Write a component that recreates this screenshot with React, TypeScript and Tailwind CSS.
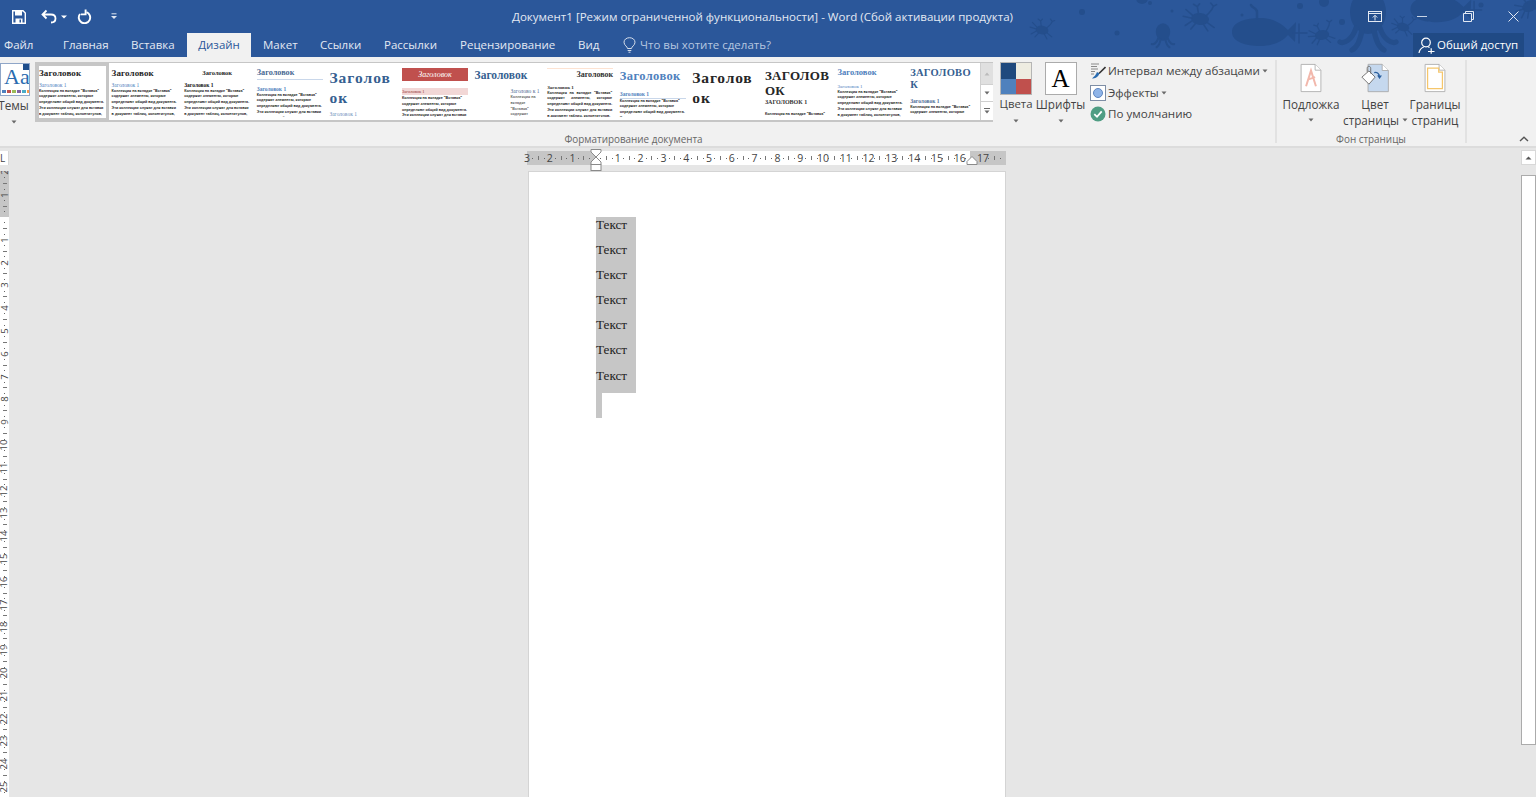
import { ReactNode } from "react";

const UI = "font-['Open_Sans','Noto_Sans',sans-serif]";
const SERIF = "font-['Liberation_Serif',serif]";

const tabs = [
  { label: "Файл", cls: "ml-[4px] w-[29px]" },
  { label: "Главная", cls: "ml-[30px] w-[45px]" },
  { label: "Вставка", cls: "ml-[23px] w-[43px]" },
  { label: "Макет", cls: "ml-[12px] w-[34px]" },
  { label: "Ссылки", cls: "ml-[23px] w-[41px]" },
  { label: "Рассылки", cls: "ml-[23px] w-[57px]" },
  { label: "Рецензирование", cls: "ml-[19px] w-[95px]" },
  { label: "Вид", cls: "ml-[23px] w-[22px]" },
];

const BODY =
  "Коллекция на вкладке \"Вставка\" содержит элементы, которые определяют общий вид документа. Эти коллекции служат для вставки в документ таблиц, колонтитулов,";

type Style = {
  title: string;
  headCls: string;
  sub: string;
  subCls: string;
  bodyCls: string;
  top: string;
  body?: string;
};

const styles: Style[] = [
  { title: "Заголовок", headCls: "text-[9px] leading-[10px] font-bold text-[#262626] tracking-[0.1px]", sub: "Заголовок 1", subCls: "text-[5.5px] leading-[7px] mt-[3.5px] text-[#4f81bd]", bodyCls: "", top: "pt-[2px] pl-0" },
  { title: "Заголовок", headCls: "text-[9px] leading-[10px] font-bold text-[#262626] tracking-[0.1px]", sub: "Заголовок 1", subCls: "text-[5.5px] leading-[7px] mt-[3.5px] text-[#4f81bd]", bodyCls: "", top: "pt-[5px] pl-[3px]" },
  { title: "Заголовок", headCls: "text-[6.5px] leading-[10px] font-bold text-[#262626] text-center", sub: "Заголовок 1", subCls: "text-[5.5px] leading-[7px] mt-[3.5px] font-bold text-[#111]", bodyCls: "", top: "pt-[5px] pl-[3px]" },
  { title: "Заголовок", headCls: "text-[8.2px] leading-[10px] font-bold text-[#4a6a94] border-b border-[#c9d7ea] pb-[1px]", sub: "Заголовок 1", subCls: "text-[5.5px] leading-[7px] mt-[5.5px] font-bold text-[#4f81bd]", bodyCls: "", top: "pt-[5px] pl-[3px]" },
  { title: "Заголов ок", headCls: "text-[15.5px] leading-[20px] font-bold text-[#365f91] tracking-[1px]", sub: "Заголовок 1", subCls: "text-[5.5px] leading-[7px] mt-[2.5px] text-[#6f8fbb]", bodyCls: "hidden", top: "pt-[5px] pl-[3px]" },
  { title: "Заголовок", headCls: "text-[8px] leading-[13px] italic text-white bg-[#c0504d] text-center", sub: "Заголовок 1", subCls: "text-[4.5px] leading-[7px] mt-[7px] bg-[#f2d7d6] text-[#943634]", bodyCls: "mt-[1px]", top: "pt-[5px] pl-[3px] pr-[4px]", body: "Коллекция на вкладке \"Вставка\" содержит элементы, которые определяют общий вид документа. Эти коллекции служат для вставки в" },
  { title: "Заголовок", headCls: "text-[11.5px] leading-[12px] font-bold text-[#365f91] whitespace-nowrap", sub: "Заголово к 1", subCls: "text-[5.5px] leading-[6px] mt-[7px] ml-[36px] w-[26px] text-[#4f6d96]", bodyCls: "ml-[36px] !w-[26px] mt-[1px] opacity-70", top: "pt-[6px] pl-[3px]", body: "Коллекция на вкладке \"Вставка\" содержит" },
  { title: "Заголовок", headCls: "text-[8px] leading-[11px] font-bold text-[#333] text-right border-t border-[#fde3d2]", sub: "Заголовок 1", subCls: "text-[5px] leading-[7px] mt-[4px] font-bold text-[#333]", bodyCls: "text-justify", top: "pt-[4.5px] pl-[3px]" },
  { title: "Заголовок", headCls: "text-[12.5px] leading-[13px] font-bold text-[#4f81bd] tracking-[0.4px] whitespace-nowrap", sub: "Заголовок 1", subCls: "text-[5.5px] leading-[7px] mt-[8px] font-bold text-[#4f81bd] border-b border-[#c9d7ea]", bodyCls: "", top: "pt-[6.5px] pl-[3px]", body: "Коллекция на вкладке \"Вставка\" содержит элементы, которые определяют общий вид документа. Эти коллекции служат для вставки в документ таблиц." },
  { title: "Заголов ок", headCls: "text-[15.5px] leading-[20px] font-bold text-[#262626] tracking-[0.8px]", sub: "", subCls: "", bodyCls: "hidden", top: "pt-[5px] pl-[3px]" },
  { title: "ЗАГОЛОВ ОК", headCls: "text-[13px] leading-[15px] font-bold text-[#262626] tracking-[0.3px]", sub: "ЗАГОЛОВОК 1", subCls: "text-[6px] leading-[8px] mt-[0.5px] font-bold text-[#333]", bodyCls: "mt-[6px]", top: "pt-[4.5px] pl-[3px]", body: "Коллекция на вкладке \"Вставка\" содержит" },
  { title: "Заголовок", headCls: "text-[8.5px] leading-[10px] font-bold text-[#4f81bd]", sub: "Заголовок 1", subCls: "text-[5px] leading-[7px] mt-[5.5px] text-[#4f81bd]", bodyCls: "", top: "pt-[4px] pl-[3px]" },
  { title: "ЗАГОЛОВО К", headCls: "text-[10.5px] leading-[12px] font-bold text-[#365f91] tracking-[0.3px]", sub: "Заголовок 1", subCls: "text-[5.5px] leading-[7px] mt-[6.5px] font-bold text-[#4f6d96]", bodyCls: "", top: "pt-[4px] pl-[3px]", body: "Коллекция на вкладке \"Вставка\" содержит элементы, которые" },
];

function Caret({ className = "" }: { className?: string }) {
  return (
    <svg width="6" height="4" viewBox="0 0 6 4" className={className}>
      <path d="M0.5 0.5h5L3 3.5z" fill="#6a6a6a" />
    </svg>
  );
}

function GalleryItem({ s, selected }: { s: Style; selected: boolean }) {
  return (
    <div className={`w-[72.6px] h-[58px] shrink-0 ${SERIF} ${selected ? "border-[3px] border-[#c6c6c6]" : ""}`}>
      <div className={`overflow-hidden ${s.top} ${selected ? "h-[51px]" : "h-[54px]"}`}>
        <div className={`w-[66px] ${s.headCls}`}>{s.title}</div>
        {s.sub && <div className={`w-[66px] ${s.subCls}`}>{s.sub}</div>}
        <div className={`w-[65px] font-['Liberation_Sans',sans-serif] text-[3.7px] leading-[5.8px] font-bold text-[#222] ${s.bodyCls}`}>
          {s.body ?? BODY}
        </div>
      </div>
    </div>
  );
}

function RulerCell({ n }: { n?: number }) {
  return (
    <div className="flex items-center shrink-0 w-[22.8px]">
      <span className="w-0 flex justify-center text-[10.5px] leading-none text-[#444]">{n ?? ""}</span>
      <span className="ml-[5.7px] w-0 flex justify-center">
        <span className="w-px h-px bg-[#666] block shrink-0" />
      </span>
      <span className="ml-[5.7px] w-0 flex justify-center">
        <span className="w-px h-[4px] bg-[#777] block shrink-0" />
      </span>
      <span className="ml-[5.7px] w-0 flex justify-center">
        <span className="w-px h-px bg-[#666] block shrink-0" />
      </span>
    </div>
  );
}

function VRulerCell({ n }: { n?: number }) {
  return (
    <div className="flex flex-col items-center h-[22.8px] w-full shrink-0">
      <span className="h-0 flex items-center text-[9.5px] leading-none text-[#444] -rotate-90">{n ?? ""}</span>
      <span className="mt-[5.7px] h-0 flex items-center">
        <span className="w-px h-px bg-[#666] block shrink-0" />
      </span>
      <span className="mt-[5.7px] h-0 flex items-center">
        <span className="w-[4px] h-px bg-[#777] block shrink-0" />
      </span>
      <span className="mt-[5.7px] h-0 flex items-center">
        <span className="w-px h-px bg-[#666] block shrink-0" />
      </span>
    </div>
  );
}

function Crab({ x, y, s = 1, r = 0 }: { x: number; y: number; s?: number; r?: number }) {
  return (
    <g transform={`translate(${x} ${y}) rotate(${r}) scale(${s})`} stroke="currentColor" strokeWidth="1.6" fill="none" strokeLinecap="round">
      <ellipse cx="0" cy="0" rx="9" ry="6" fill="currentColor" stroke="none" />
      <path d="M-8 -3L-15 -8M-8 0L-17 -1M-8 3L-14 8M-4 5L-8 11M8 3L15 7M4 5L9 11" />
      <path d="M6 -4C9 -8 11 -9 12 -14M12 -14L9 -17M12 -14L15 -16M-2 -5L-4 -12M-4 -12L-8 -14M-4 -12L-2 -15" />
    </g>
  );
}

function Octopus({ x, y, s = 1 }: { x: number; y: number; s?: number }) {
  return (
    <g transform={`translate(${x} ${y}) scale(${s})`} fill="currentColor" stroke="currentColor" strokeLinecap="round">
      <ellipse cx="0" cy="-5" rx="9" ry="11" stroke="none" />
      <path d="M-6 3C-8 9 -12 11 -14 10M-3 4C-4 10 -6 13 -8 14M3 4C4 10 6 13 8 14M6 3C8 9 12 11 14 10" fill="none" strokeWidth="2.6" />
    </g>
  );
}

function Submarine({ x, y, s = 1 }: { x: number; y: number; s?: number }) {
  return (
    <g transform={`translate(${x} ${y}) scale(${s})`} fill="currentColor" stroke="currentColor" strokeLinecap="round">
      <path d="M-28 0C-28 -10 -14 -14 0 -14C14 -14 22 -8 28 -2L36 -10L35 10L28 3C22 10 12 14 0 14C-14 14 -28 10 -28 0Z" stroke="none" />
      <path d="M-3 -14V-20C-3 -24 -8 -24 -9 -27" fill="none" strokeWidth="2.5" />
      <path d="M39 -8V11M33 1H47" fill="none" strokeWidth="1.5" />
    </g>
  );
}

function Pattern() {
  return (
    <svg viewBox="0 0 1536 57" className="absolute inset-0 w-full h-full text-[#244e8c]">
      <g fill="currentColor">
        <circle cx="1082" cy="12" r="3" />
        <circle cx="1117" cy="33" r="2.5" />
        <circle cx="1172" cy="11" r="1.5" />
        <circle cx="1300" cy="6" r="3" />
        <circle cx="1150" cy="3" r="2" />
        <circle cx="1342" cy="22" r="3" />
        <circle cx="1242" cy="15" r="1.5" />
        <circle cx="1324" cy="2" r="5" />
        <circle cx="1445" cy="38" r="5" />
        <circle cx="1481" cy="5" r="2.5" />
        <circle cx="1488" cy="50" r="13" />
        <circle cx="1142" cy="-2" r="6" />
      </g>
      <Crab x={1042} y={30} s={0.72} r={10} />
      <Octopus x={1163} y={36} s={0.8} />
      <Crab x={1200} y={19} s={1} r={6} />
      <Submarine x={1260} y={32} />
      <Crab x={1322} y={35} s={0.8} r={-10} />
      <Octopus x={1368} y={22} s={2} />
      <Crab x={1403} y={27} s={0.7} r={15} />
      <Submarine x={1437} y={9} s={0.95} />
      <Crab x={1530} y={6} s={0.9} r={-25} />
    </svg>
  );
}

function BigButton({ icon, lines, caretInline, caretBelow, w }: { icon: ReactNode; lines: string[]; caretInline?: boolean; caretBelow?: boolean; w: string }) {
  return (
    <div className={`flex flex-col items-center shrink-0 text-[11.7px] leading-[16px] text-[#444] ${w}`}>
      <div className="h-[36px] flex items-center">{icon}</div>
      {lines.map((l, i) => {
        const withCaret = caretInline && i === lines.length - 1;
        return (
          <div key={l} className={`relative whitespace-nowrap ${withCaret ? "mr-[8px]" : ""}`}>
            {l}
            {withCaret && <Caret className="absolute left-full top-[6px] ml-[3px]" />}
          </div>
        );
      })}
      {caretBelow && <Caret className="mt-[6px]" />}
    </div>
  );
}

function PageIcon({ children, fill = "#fff" }: { children?: ReactNode; fill?: string }) {
  return (
    <svg width="28" height="30" viewBox="0 0 34 36">
      <path d="M5 1.5H22L29 8.5V34.5H5Z" fill={fill} stroke="#a8a8a8" />
      <path d="M22 1.5V8.5H29" fill="#fff" stroke="#a8a8a8" />
      {children}
    </svg>
  );
}

export default function App() {
  return (
    <div className={`h-[797px] w-[1536px] overflow-hidden bg-[#e6e6e6] ${UI}`}>
      <div className="relative h-[57px] bg-[#2b579a]">
        <Pattern />
        <div className="relative h-[33px] flex items-center">
          <svg width="14" height="14" viewBox="0 0 14 14" className="ml-[12px]">
            <path d="M0.7 0.7H11L13.3 3V13.3H0.7Z" fill="none" stroke="#fff" strokeWidth="1.4" />
            <rect x="3" y="1" width="7" height="4.5" fill="#fff" />
            <rect x="3.5" y="8.5" width="7" height="4.5" fill="#fff" />
            <rect x="7.5" y="9.5" width="1.5" height="3" fill="#2b579a" />
          </svg>
          <svg width="16" height="15" viewBox="0 0 16 15" className="ml-[15px]">
            <path d="M5.5 1.5L1.5 5.5L5.5 9.5M1.5 5.5H10C13 5.5 14.5 7.5 14.5 9.5C14.5 11.5 13 13.5 10 13.5" fill="none" stroke="#fff" strokeWidth="1.8" />
          </svg>
          <svg width="6" height="4" viewBox="0 0 6 4" className="ml-[4px]">
            <path d="M0 0.5h6L3 3.5z" fill="#fff" />
          </svg>
          <svg width="15" height="15" viewBox="0 0 15 15" className="ml-[10px]">
            <path d="M9.5 3.2A5.7 5.7 0 1 1 3 5" fill="none" stroke="#fff" strokeWidth="1.9" />
            <path d="M8.6 0.5V5.4H3.8" fill="none" stroke="#fff" strokeWidth="1.9" />
          </svg>
          <svg width="6" height="7" viewBox="0 0 6 7" className="ml-[19px]">
            <path d="M0.5 0.8H5.5" stroke="#dfe6f1" strokeWidth="1" />
            <path d="M0 3h6L3 6z" fill="#dfe6f1" />
          </svg>
          <div className="ml-[395px] w-[501px] text-center text-[11.55px] text-[#e3e9f3] whitespace-nowrap">
            Документ1 [Режим ограниченной функциональности] - Word (Сбой активации продукта)
          </div>
          <svg width="14" height="11" viewBox="0 0 14 11" className="ml-[355px]">
            <rect x="0.5" y="0.5" width="13" height="10" fill="none" stroke="#e3e9f3" />
            <path d="M0.5 2.5H13.5" stroke="#e3e9f3" />
            <path d="M7 9.5V4.5M4.8 6.5L7 4.3L9.2 6.5" fill="none" stroke="#e3e9f3" />
          </svg>
          <div className="ml-[35px] w-[10px] h-px bg-[#c9d5e6]" />
          <svg width="11" height="11" viewBox="0 0 11 11" className="ml-[36px]">
            <path d="M0.5 2.5H8.5V10.5H0.5ZM2.5 2.5V0.5H10.5V8.5H8.5" fill="none" stroke="#e3e9f3" />
          </svg>
          <svg width="11" height="11" viewBox="0 0 11 11" className="ml-[34px]">
            <path d="M0.5 0.5L10.5 10.5M10.5 0.5L0.5 10.5" stroke="#e3e9f3" />
          </svg>
        </div>
        <div className="relative h-[24px] flex items-center text-[11.5px] text-[#e3e9f3]">
          {tabs.slice(0, 3).map((t) => (
            <div key={t.label} className={`${t.cls} whitespace-nowrap`}>{t.label}</div>
          ))}
          <div className="ml-[13px] w-[64px] h-full bg-[#f1f1f1] text-[#2b579a] flex items-center justify-center">Дизайн</div>
          {tabs.slice(3).map((t) => (
            <div key={t.label} className={`${t.cls} whitespace-nowrap`}>{t.label}</div>
          ))}
          <svg width="13" height="16" viewBox="0 0 13 16" className="ml-[23px]">
            <path d="M4.5 11.5C4.5 9.5 1 8.5 1 5.2C1 2.6 3.4 0.7 6.5 0.7C9.6 0.7 12 2.6 12 5.2C12 8.5 8.5 9.5 8.5 11.5ZM4.7 13.5H8.3M5.5 15.2H7.5" fill="none" stroke="#d6deeb" />
          </svg>
          <div className="ml-[4px] text-[#b6c7e0] whitespace-nowrap">Что вы хотите сделать?</div>
          <div className="ml-auto mr-[12px] w-[111px] h-full bg-[#204a85] flex items-center text-white whitespace-nowrap">
            <svg width="17" height="17" viewBox="0 0 17 17" className="ml-[5px] mr-[2px]">
              <circle cx="8" cy="5.5" r="4.3" fill="none" stroke="#fff" strokeWidth="1.2" />
              <path d="M1 16C1.5 12 4 10.5 6 9.7M10 9.7C10.5 10 11 10.2 11.5 10.6M10 14.5H16.5M13.2 11.2V16.8" fill="none" stroke="#fff" strokeWidth="1.2" />
            </svg>
            Общий доступ
          </div>
        </div>
      </div>

      <div className="h-[91px] bg-[#f1f1f1] border-b-2 border-[#dcdcdc] flex">
        <div className="w-[1277px] shrink-0 flex flex-col border-r-2 border-[#e2e2e2] mt-[3px] mb-[3px]">
          <div className="h-[73px] shrink-0 flex">
            <div className="w-[33px] shrink-0 flex flex-col items-center pt-[3px] text-[11.7px] leading-[16px] text-[#444]">
              <div className="w-[30px] h-[33px] border border-[#8fa6c8] bg-[#fff] relative overflow-hidden -ml-[3px] shrink-0">
                <div className={`${SERIF} text-[#2b6cb0] text-[22px] leading-[24px] pl-[3px] pt-[1px] whitespace-nowrap`}>Aa</div>
                <div className="absolute top-0 right-0 w-[6px] h-[6px] bg-[#1f4e8c]" />
                <div className="absolute bottom-[2px] left-[1px] flex gap-px">
                  <span className="w-[4px] h-[3px] bg-[#4f81bd]" />
                  <span className="w-[4px] h-[3px] bg-[#c0504d]" />
                  <span className="w-[4px] h-[3px] bg-[#9bbb59]" />
                  <span className="w-[4px] h-[3px] bg-[#8064a2]" />
                  <span className="w-[4px] h-[3px] bg-[#4bacc6]" />
                  <span className="w-[4px] h-[3px] bg-[#f79646]" />
                </div>
              </div>
              <div className="mt-[1px] -ml-[6px]">Темы</div>
              <Caret className="mt-[7px] -ml-[5px]" />
            </div>
            <div className="ml-[2px] mt-[2px] w-[958px] h-[60px] shrink-0 flex bg-white border border-[#c6c6c6] border-b-2">
              <div className="flex w-[944px] shrink-0 overflow-hidden">
                {styles.map((s, i) => (
                  <GalleryItem key={i} s={s} selected={i === 0} />
                ))}
              </div>
              <div className="w-[13px] shrink-0 flex flex-col bg-[#f1f1f1] border-l border-[#d0d0d0]">
                <div className="h-[21px] bg-[#e0e0e0] flex items-center justify-center">
                  <svg width="6" height="4" viewBox="0 0 6 4"><path d="M0.5 3.5h5L3 0.5z" fill="#bbb" /></svg>
                </div>
                <div className="h-[18px] border-y border-[#d0d0d0] bg-white flex items-center justify-center">
                  <Caret />
                </div>
                <div className="flex-1 bg-white flex flex-col items-center justify-center gap-px">
                  <div className="w-[6px] h-px bg-[#6a6a6a]" />
                  <Caret />
                </div>
              </div>
            </div>
            <div className="ml-[2px] pt-[2px] w-[42px] shrink-0 flex flex-col items-center text-[11.4px] leading-[16px] text-[#444]">
              <div className="w-[32px] h-[33px] grid grid-cols-2 grid-rows-2 border border-[#b5b5b5] shrink-0">
                <span className="bg-[#1f497d]" />
                <span className="bg-[#eeece1]" />
                <span className="bg-[#4f81bd]" />
                <span className="bg-[#c0504d]" />
              </div>
              <div className="mt-[1px]">Цвета</div>
              <Caret className="mt-[7px]" />
            </div>
            <div className="w-[47px] pt-[2px] shrink-0 flex flex-col items-center text-[11.7px] leading-[16px] text-[#444]">
              <div className={`w-[32px] h-[33px] bg-white border border-[#ababab] flex items-center justify-center shrink-0 text-[25px] text-black ${SERIF}`}>A</div>
              <div className="mt-[1px]">Шрифты</div>
              <Caret className="mt-[7px]" />
            </div>
            <div className="ml-[6px] flex flex-col text-[11.6px] leading-[16px] text-[#444]">
              <div className="h-[22px] flex items-center gap-[2px] whitespace-nowrap">
                <svg width="16" height="16" viewBox="0 0 16 16">
                  <path d="M1 1H9M1 3.5H7M1 6H8M1 8.5H5M1 11H4" stroke="#8a8a8a" />
                  <path d="M15.5 4L9 10.5" stroke="#333" strokeWidth="1.6" />
                  <path d="M2 15.5C5 15.5 8 14.5 9.5 10.5L7 9C6 12 4 13.5 2 15.5Z" fill="#2b6cb0" />
                </svg>
                Интервал между абзацами
                <Caret />
              </div>
              <div className="h-[21px] flex items-center gap-[2px] whitespace-nowrap">
                <div className="w-[16px] h-[16px] border border-[#7e8ea5] bg-white flex items-center justify-center">
                  <div className="w-[10px] h-[10px] rounded-full bg-[#8fb4e8] border border-[#5e86c0]" />
                </div>
                Эффекты
                <Caret />
              </div>
              <div className="h-[22px] flex items-center gap-[2px] whitespace-nowrap">
                <svg width="16" height="16" viewBox="0 0 16 16">
                  <circle cx="8" cy="8" r="7.5" fill="#4f9d83" />
                  <path d="M4.3 8.2L7 10.8L11.7 5.4" fill="none" stroke="#fff" strokeWidth="1.8" />
                </svg>
                По умолчанию
              </div>
            </div>
          </div>
          <div className="text-center text-[9.9px] leading-[12px] text-[#666] pr-[8px]">Форматирование документа</div>
        </div>
        <div className="w-[190px] shrink-0 flex flex-col border-r-2 border-[#e2e2e2] mt-[3px] mb-[3px]">
          <div className="h-[73px] shrink-0 flex pl-[4px]">
            <BigButton
              w="w-[60px]"
              lines={["Подложка"]}
              caretBelow
              icon={
                <PageIcon>
                  <path d="M11 28L17 9L23 28M13 20L22 17" fill="none" stroke="#f2b8ac" strokeWidth="2.4" />
                </PageIcon>
              }
            />
            <BigButton
              w="ml-[3px] w-[62px]"
              lines={["Цвет", "страницы"]}
              caretInline
              icon={
                <svg width="30" height="30" viewBox="0 0 34 34" className="ml-[2px]">
                  <path d="M8 1.5H24L31 8.5V32.5H8Z" fill="#c5d8ee" stroke="#a8a8a8" />
                  <path d="M24 1.5V8.5H31" fill="#fff" stroke="#a8a8a8" />
                  <path d="M1 16L9 9L16 16L9 24Z" fill="#fff" stroke="#666" />
                  <path d="M7 10V6C7 3 11 3 11 6V12" fill="none" stroke="#666" />
                  <path d="M15 11C18 10 21 12 21 16M19 14L21 17L23 14" fill="none" stroke="#2a5f9e" strokeWidth="1.4" />
                </svg>
              }
            />
            <BigButton
              w="w-[58px]"
              lines={["Границы", "страниц"]}
              icon={
                <PageIcon>
                  <path d="M8 6H21.5V11H26V31H8Z" fill="#fff" stroke="#f5c66b" strokeWidth="1.5" />
                </PageIcon>
              }
            />
          </div>
          <div className="text-center text-[9.9px] leading-[12px] text-[#666]">Фон страницы</div>
        </div>
        <div className="flex-1 flex items-end justify-end pr-[7px] pb-[4px]">
          <svg width="10" height="6" viewBox="0 0 10 6">
            <path d="M1 5L5 1.2L9 5" fill="none" stroke="#555" strokeWidth="1.4" />
          </svg>
        </div>
      </div>

      <div className="h-[649px] flex relative">
        <div className="w-[9px] shrink-0 flex flex-col">
          <div className="mt-[3px] h-[14px] bg-white text-[10px] leading-[14px] text-[#444] border-r border-[#d8d8d8]">L</div>
          <div className="mt-[6px] flex-1 overflow-hidden bg-white flex flex-col">
            <div className="h-[46px] bg-[#c6c6c6] overflow-hidden shrink-0 flex flex-col pt-[1px]">
              <VRulerCell n={2} />
              <VRulerCell n={1} />
            </div>
            {Array.from({ length: 26 }, (_, i) => (
              <VRulerCell key={i} n={i === 0 ? undefined : i} />
            ))}
          </div>
        </div>
        <div className="flex-1 flex flex-col pl-[516px] relative">
          <div className="mt-[3px] ml-[2px] h-[14px] w-[479px] flex items-center">
            <div className="w-[68px] h-full bg-[#c6c6c6] shrink-0 flex items-center">
              <RulerCell n={3} />
              <RulerCell n={2} />
              <RulerCell n={1} />
            </div>
            <div className="w-[375px] h-full bg-white shrink-0 flex items-center overflow-hidden">
              {Array.from({ length: 17 }, (_, i) => (
                <RulerCell key={i} n={i === 0 ? undefined : i} />
              ))}
            </div>
            <div className="w-[36px] h-full bg-[#c6c6c6] shrink-0 flex items-center pl-[13px] overflow-hidden">
              <RulerCell n={17} />
            </div>
          </div>
          <svg width="12" height="23" viewBox="0 0 12 23" className="absolute left-[581px] top-[1px]">
            <path d="M1 0.5H11V3L6 8L1 3Z" fill="#fff" stroke="#8a8a8a" />
            <path d="M6 8L11 13V15.5H1V13Z" fill="#fff" stroke="#8a8a8a" />
            <rect x="1" y="15.5" width="10" height="6" fill="#fff" stroke="#8a8a8a" />
          </svg>
          <svg width="12" height="9" viewBox="0 0 12 9" className="absolute left-[957px] top-[8px]">
            <path d="M6 0.5L11 5.5V8.5H1V5.5Z" fill="#fff" stroke="#8a8a8a" />
          </svg>
          <div className={`ml-[3px] mt-[6px] w-[478px] flex-1 bg-white border-x border-t border-[#d4d4d4] pt-[45px] pl-[67px] ${SERIF}`}>
            <div className="w-[40px] bg-[#c6c6c6] text-[13.2px] text-[#222]">
              {Array.from({ length: 7 }, (_, i) => (
                <div key={i} className="h-[25.1px] leading-[16px]">Текст</div>
              ))}
            </div>
            <div className="w-[6px] h-[25px] bg-[#c6c6c6]" />
          </div>
        </div>
        <div className="w-[15px] shrink-0 flex flex-col">
          <div className="mt-[2px] h-[15px] bg-white border border-[#d8d8d8] flex items-center justify-center">
            <svg width="7" height="4" viewBox="0 0 7 4"><path d="M0.5 3.5h6L3.5 0.5z" fill="#555" /></svg>
          </div>
          <div className="mt-[10px] h-[570px] bg-white border border-[#ababab]" />
        </div>
      </div>
    </div>
  );
}
